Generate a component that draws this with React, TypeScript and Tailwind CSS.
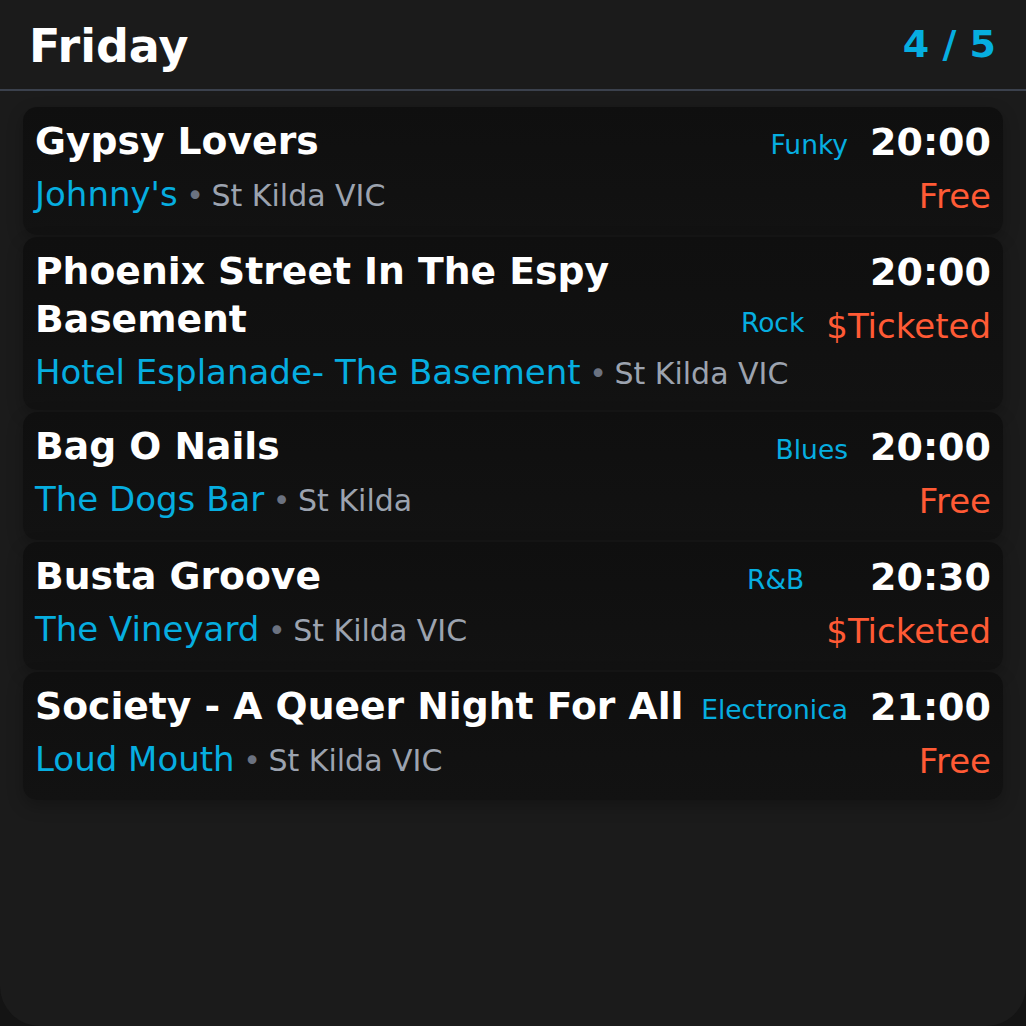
const gigs = [
  { title: "Gypsy Lovers", genre: "Funky", time: "20:00", venue: "Johnny's", place: "St Kilda VIC", price: "Free" },
  { title: "Phoenix Street In The Espy Basement", genre: "Rock", time: "20:00", venue: "Hotel Esplanade- The Basement", place: "St Kilda VIC", price: "$Ticketed" },
  { title: "Bag O Nails", genre: "Blues", time: "20:00", venue: "The Dogs Bar", place: "St Kilda", price: "Free" },
  { title: "Busta Groove", genre: "R&B", time: "20:30", venue: "The Vineyard", place: "St Kilda VIC", price: "$Ticketed" },
  { title: "Society - A Queer Night For All", genre: "Electronica", time: "21:00", venue: "Loud Mouth", place: "St Kilda VIC", price: "Free" },
];

function GigCard({ gig }: { gig: (typeof gigs)[number] }) {
  return (
    <div className="flex items-start gap-[22px] rounded-[14px] bg-gradient-to-b from-[#0f0f0f] to-[#121212] px-3 pt-[10px] pb-4 shadow-[0_6px_16px_rgba(0,0,0,0.25)]">
      <div className="min-w-0 flex-1">
        <div className="flex items-end justify-between gap-2">
          <h3 className="text-[37.7px] leading-[48px] font-bold text-white">{gig.title}</h3>
          <span className="shrink-0 text-[26.5px] leading-[40px] text-[#06aee0]">{gig.genre}</span>
        </div>
        <div className="mt-[8px] text-[34px] leading-[43px]">
          <span className="text-[#06aee0]">{gig.venue}</span>
          <span className="text-[30px] leading-none tracking-[-1px] text-[#6b7280]"> • </span>
          <span className="text-[30px] leading-none text-[#9ca3af]">{gig.place}</span>
        </div>
      </div>
      <div className="flex shrink-0 flex-col items-end">
        <span className="text-[38px] leading-[50px] font-bold text-white">{gig.time}</span>
        <span className="mt-[7px] text-[34px] leading-[45px] text-[#ff5a35]">{gig.price}</span>
      </div>
    </div>
  );
}

export default function App() {
  return (
    <div className="h-[1026px] w-full bg-[#141414] font-['DejaVu_Sans',sans-serif]">
      <div className="h-full overflow-hidden rounded-b-[40px] bg-[#1b1b1b]">
        <header className="flex h-[91px] items-center justify-between border-b-2 border-[#3b414d] pl-[29px] pr-[30px]">
          <h1 className="pt-1 text-[46px] font-bold text-white">Friday</h1>
          <span className="text-[38px] font-bold text-[#06aee0]">4 / 5</span>
        </header>
        <div className="flex flex-col gap-[2px] px-[23px] pt-4">
          {gigs.map((g) => (
            <GigCard key={g.title} gig={g} />
          ))}
        </div>
      </div>
    </div>
  );
}
